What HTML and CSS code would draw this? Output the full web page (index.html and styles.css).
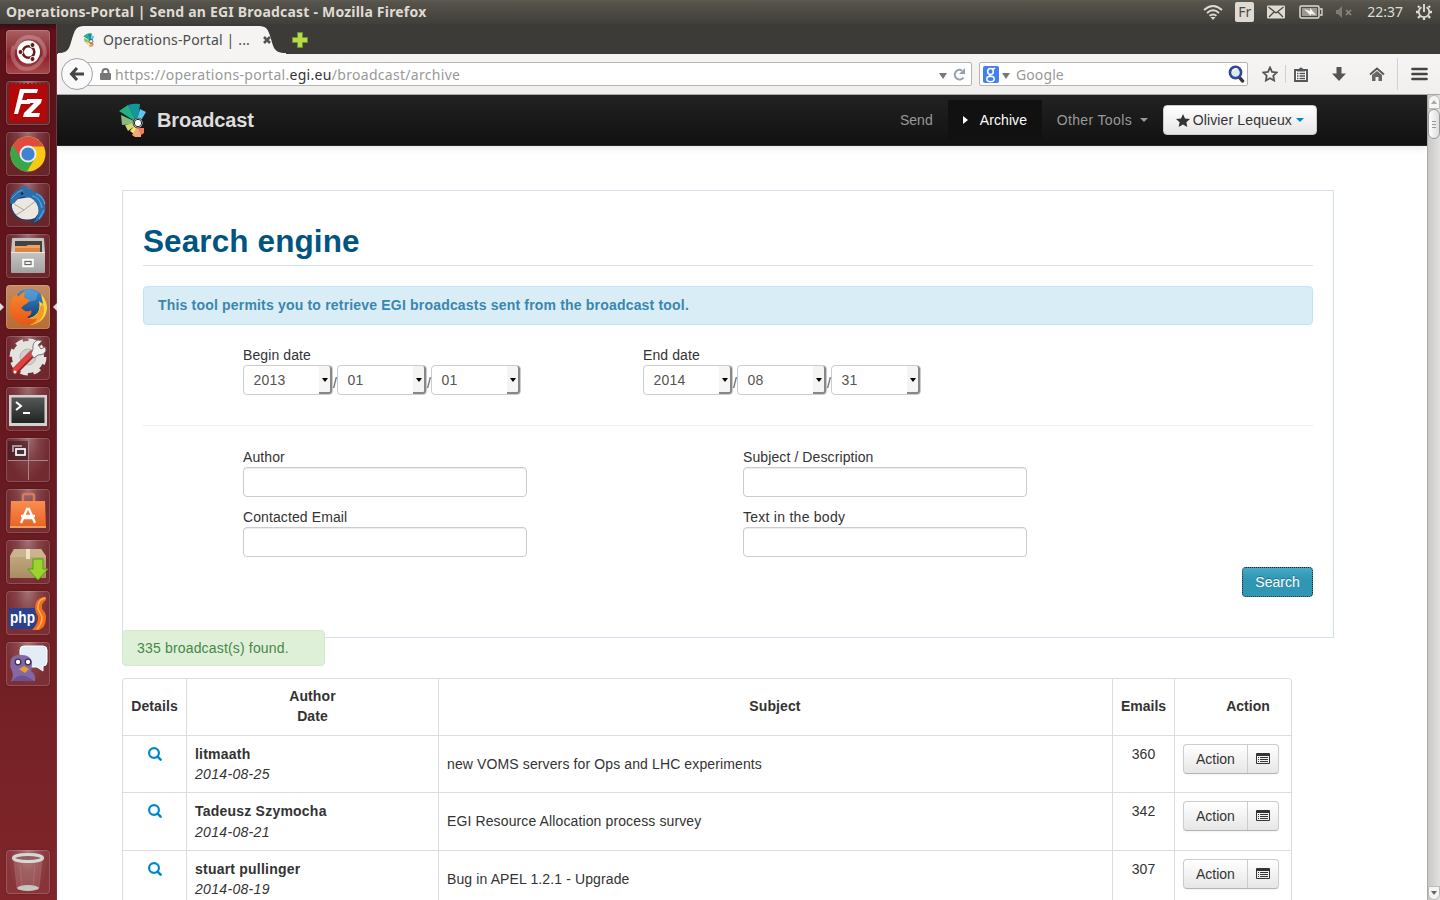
FILE: index.html
```html
<!DOCTYPE html>
<html lang="en">
<head>
<meta charset="utf-8">
<title>Operations-Portal | Send an EGI Broadcast</title>
<link rel="stylesheet" href="styles.css">
</head>
<body>
<svg class="defs" aria-hidden="true">
  <defs>
    <symbol id="egi" viewBox="0 0 28 34">
      <path d="M0 8 9 2l8 16-3-1z" fill="#22b183"/><path d="M9 2q6-2 12-1l-2 15-3 1z" fill="#14969a"/><path d="m21 6 6 3-6 10-3-2z" fill="#5fc4ec"/>
      <path d="m2 12 13 6-1 3-11 1z" fill="#88b97e"/><path d="m6 22 9-2 1 3-7 5z" fill="#cdd774"/><path d="m11 28 5-6 2 3-3 6z" fill="#fbe26a"/>
      <path d="m13 32 5-8 4 1v9h-6z" fill="#f4a878"/><path d="M19 25h6l0 5-3 2z" fill="#ee7f5b"/>
      <circle cx="19" cy="20" r="5.300" fill="#222"/><circle cx="19" cy="20" r="4.500" fill="#fff"/><circle cx="19" cy="20" r="3.700" fill="#fff" stroke="#222"/>
    </symbol>
    <symbol id="find" viewBox="0 0 14 14"><circle cx="6" cy="6" r="4.900" fill="none" stroke="#08c" stroke-width="2.200"/><path d="m9.600 9.600 3 3" stroke="#08c" stroke-width="2.600" stroke-linecap="round"/></symbol>
    <symbol id="list" viewBox="0 0 14 12"><path d="M1 0h12q1 0 1 1v9q0 1-1 1H1q-1 0-1-1V1q0-1 1-1zm0 3v7h12V3z" fill="#333" fill-rule="evenodd"/><path d="M2 4.500h1m1 0h8m-10 2h1m1 0h8m-10 2h1m1 0h8" stroke="#333"/></symbol>
    <linearGradient id="steel" x2="0" y2="1"><stop stop-color="#c4c4c2"/><stop offset="1" stop-color="#a2a2a0"/></linearGradient>
    <linearGradient id="orange" x2="0" y2="1"><stop stop-color="#f98e50"/><stop offset="1" stop-color="#ea6023"/></linearGradient>
    <linearGradient id="box" x2="0" y2="1"><stop stop-color="#c8b084"/><stop offset="1" stop-color="#a98d62"/></linearGradient>
    <linearGradient id="blue" x2="0" y2="1"><stop stop-color="#3c8fd6"/><stop offset="1" stop-color="#123667"/></linearGradient>
    <linearGradient id="flame" x2="0" y2="1"><stop stop-color="#f58a28"/><stop offset="1" stop-color="#e8551a"/></linearGradient>
    <linearGradient id="dark" x2="0" y2="1"><stop stop-color="#555857"/><stop offset="1" stop-color="#1f2322"/></linearGradient>
  </defs>
</svg>

<header class="titlebar">
  <span class="window-title">Operations-Portal | Send an EGI Broadcast - Mozilla Firefox</span>
  <div class="indicators">
    <svg class="wifi" width="20" height="16" viewBox="0 0 20 16" fill="none" stroke="#dfdbd2" stroke-width="1.900"><path d="M1 6q9-8 18 0M4 9q6-5.400 12 0M6.500 11.800q3.500-2.800 7 0"/><path d="m7.500 13 2.500 3 2.500-3z" fill="#dfdbd2" stroke="none"/></svg>
    <span class="keyboard">Fr</span>
    <svg width="18" height="14" viewBox="0 0 18 14"><rect width="18" height="13" y=".5" rx="1" fill="#dfdbd2"/><path d="m1.500 2 7.500 6 7.500-6M2 12l5-5m9 5-5-5" fill="none" stroke="#4a4943" stroke-width="1.300"/></svg>
    <svg width="24" height="14" viewBox="0 0 24 14"><rect x="1" y="1" width="19" height="12" rx="1.500" fill="none" stroke="#dfdbd2" stroke-width="1.500"/><rect x="3" y="3" width="15" height="8" fill="#9b9991"/><path d="M21 4h2v6h-2" fill="none" stroke="#dfdbd2" stroke-width="1.300"/><path d="m5 4 6 2V3l6 7-5-1v2z" fill="#f5f3ee"/></svg>
    <svg width="18" height="14" viewBox="0 0 18 14"><path d="M1 5h2l4-4v12L3 9H1z" fill="#7d7b74"/><path d="m11 5 5 5m0-5-5 5" stroke="#8a8880" stroke-width="1.700"/></svg>
    <span class="clock">22:37</span>
    <svg width="18" height="18" viewBox="0 0 18 18" fill="none" stroke="#dfdbd2"><path d="M6.500 4.200a5.300 5.300 0 1 0 5 0" stroke-width="1.800"/><path d="M9 1v8" stroke-width="1.900"/><path d="M4.500 4.500 3 3m10.500 1.500L15 3M4 9H1m13 0h3M5 13l-2 2m10.500-2 1.500 2M9 14.500V17" stroke-width="2.300"/></svg>
  </div>
</header>

<div class="desktop">
  <nav class="launcher">
    <span class="tile ubuntu"><svg viewBox="0 0 44 44"><path d="M9 19Q15 2 32 9q9 8 6 18M37 27q-7 15-22 11-12-8-7-22" fill="none" stroke="#fff" stroke-opacity=".24" stroke-width="4"/><circle cx="22.500" cy="22" r="11.500" fill="#fff"/><circle cx="22.500" cy="22" r="5.800" fill="none" stroke="#6c1a20" stroke-width="2.600"/><g fill="#6c1a20" stroke="#fff" stroke-width="1"><circle cx="14.500" cy="22" r="2.500"/><circle cx="26.500" cy="15" r="2.500"/><circle cx="26.500" cy="29" r="2.500"/></g></svg></span>
    <span class="tile"><svg viewBox="0 0 44 44"><rect x="3" y="3" width="38" height="38" fill="#b40808" stroke="#8b1518" stroke-width="2" stroke-dasharray="2 2"/><g fill="#fff"><path d="M14 8h18l-1 4H18l-2 7h9l-1 4h-9l-3 10H8z"/><path d="M21 18h15l-1 4-10 10h9l-1 4H17l1-4 10-10h-8z"/></g></svg></span>
    <span class="tile"><svg viewBox="0 0 44 44"><circle cx="22" cy="22" r="17.500" fill="#f6c915"/><path d="M7 13A17.500 17.500 0 0 0 21 39.500L29 26l-13-2z" fill="#3ba648"/><path d="M7 13A17.500 17.500 0 0 1 37.500 14.500H22L14 25z" fill="#e04b40"/><circle cx="22" cy="22" r="8.500" fill="#e9eef3"/><circle cx="22" cy="22" r="6.600" fill="#3f83cf"/></svg></span>
    <span class="tile"><svg viewBox="0 0 44 44"><path d="M5 16q5 2 9-4l22 6 2 13q-4 9-14 10 3-2 4-4-13 3-20-5-5-7-3-16z" fill="#1c3f70"/><path d="m12 16 18-3 5 14-6 8q-11 4-18-2-6-6-5-12z" fill="#ece8df"/><path d="m8 21 10 6 13-10M18 27l-8 5" fill="none" stroke="#aaa69d"/><path d="M4 20Q4 10 13 6q4-3 10-3l-4 3q6-1 9 3 9 0 11 12 2 10-6 16l-6 3q7-8 5-16-3-9-11-10-8-1-11 4-2 4-6 2z" fill="#2b6fae"/><path d="M26 13q8 1 10 12m-6-14q7 2 9 10M33 36l5-9" fill="none" stroke="#60a6dc" stroke-width="1.200"/><path d="m5 16 7-7 5-2" fill="none" stroke="#5a9fd6"/><circle cx="16" cy="10.500" r="1.200" fill="#10233c"/></svg></span>
    <span class="tile"><svg viewBox="0 0 44 44"><path d="M6 5q0-1 1-1h30q1 0 1 1l1 14H5z" fill="#c4c4c1"/><path d="M9 7h27v11H9z" fill="#444341"/><path d="M9 12h11l2-1h12v8H9z" fill="#f0a15c"/><path d="M9 14h25v4H9z" fill="#db8340"/><path d="M5 18h34v20q0 1-1 1H6q-1 0-1-1z" fill="url(#steel)"/><path d="M5 18.500h34" stroke="#e6e6e4"/><rect x="17" y="25.500" width="10" height="7" fill="#ddd" stroke="#fff" stroke-width="1.500"/><rect x="19" y="27.500" width="6" height="3" fill="#eee" stroke="#666"/></svg></span>
    <span class="tile active"><svg viewBox="0 0 44 44"><circle cx="23" cy="20" r="16" fill="url(#blue)"/><path d="M18 5q8-2 14 3l-2 7-7 2-4-5z" fill="#67a9da" opacity=".55"/><path d="M35 9q6 7 6 14-1 14-16 17l-6-6q12-2 14-9 1-5 0-9l4 3z" fill="#fbd33c"/><path d="M37 19q4 14-9 20l-6-5q12-3 12-12z" fill="#f49a25"/><path d="m7 12 4-3 1 3q4-5 7-5-1 4 0 6l4 2q0 3-5 5l-3 3 4 3q4 1 6-1 2 5-4 7 5 4 10 1-2 6-8 7-17 0-19-15Q4 17 7 12z" fill="url(#flame)"/></svg></span>
    <span class="tile"><svg viewBox="0 0 44 44"><circle cx="22" cy="21" r="11.500" fill="none" stroke="#e4e3e0" stroke-width="9"/><circle cx="22" cy="21" r="16.500" fill="none" stroke="#e4e3e0" stroke-width="4" stroke-dasharray="7.400 5.560"/><circle cx="22" cy="21" r="8" fill="#cfcecc" stroke="#b8b7b4"/><path d="m9 35 17-17" stroke="#922" stroke-width="7" stroke-linecap="round"/><path d="m9 34 17-17" stroke="#de4341" stroke-width="5" stroke-linecap="round"/><path d="m25 18 2-5q-1-7 5-9l4 1-4 4 3 4 4-2 1 3q-1 5-8 5l-4 3z" fill="#efefed" stroke="#777"/><circle cx="9" cy="36" r="1.500" fill="#fff"/></svg></span>
    <span class="tile"><svg viewBox="0 0 44 44"><path d="M3 8h38v31H3z" fill="#d2d2cf"/><path d="M5.500 10.500h33V36h-33z" fill="url(#dark)"/><path d="m10 15 5 4-5 4M17 26h7" fill="none" stroke="#fff" stroke-width="2"/></svg></span>
    <span class="tile switcher"><svg viewBox="0 0 44 44"><path d="M2 3h20v19H2z" fill="#3a1820" opacity=".6"/><path d="M22.500 3v39M2 22.500h40" stroke="#a98488"/><path d="M7 14V8h9" fill="none" stroke="#ac9397" stroke-width="2"/><rect x="10" y="11" width="9" height="6" fill="#493136" stroke="#fff" stroke-width="1.700"/></svg></span>
    <span class="tile"><svg viewBox="0 0 44 44"><path d="M17 12V7q0-2 2-2h7q2 0 2 2v5" fill="none" stroke="#d77b5d" stroke-width="2.500"/><path d="M5 12h34l1 27H4z" fill="url(#orange)"/><path d="M4 37h36v2H4z" fill="#e9a15d"/><path d="m15 34 6-14h2l6 14M15 27h14M17 29h10" fill="none" stroke="#fff" stroke-width="2.300"/></svg></span>
    <span class="tile"><svg viewBox="0 0 44 44"><path d="m8 9 27 0 5 7v22H4V16z" fill="url(#box)"/><path d="m8 9-4 8h36l-5-8z" fill="#c8b58f"/><path d="M20 9h4v10h-4z" fill="#eee2c4"/><path d="M27 19h10v10h5l-10 11-10-11h5z" fill="#9bd42b" stroke="#539d18"/></svg></span>
    <span class="tile"><svg viewBox="0 0 44 44"><path d="M3 17h27v21H3z" fill="#2c418d"/><path d="M40 6h-3q-8 2-8 11 0 4 3 8 1 7-6 14h7q7-2 7-13 0-4-4-8-1-6 4-9z" fill="#f36c21"/><path d="M39 7q-8 2-7 11l4 8q0 7-5 12" fill="none" stroke="#ffb34b" stroke-width="1.500"/><text x="4" y="32" class="php" textLength="25" lengthAdjust="spacingAndGlyphs">php</text></svg></span>
    <span class="tile"><svg viewBox="0 0 44 44"><path d="M18 4h19q4 0 4 4v12q0 4-4 4v5l-6-4H17q-3 0-3-4V8q0-4 4-4z" fill="#e3edf8" stroke="#fff"/><path d="M5 39q3-5 1-10-3-5-1-12 4-5 11-4 9 0 10 8 0 4-1 8 5 3 4 10z" fill="#8468a6"/><path d="M6 39q9-11 22 0z" fill="#6b5290"/><g fill="#fff" stroke="#413150" stroke-width="1.300"><circle cx="12" cy="20" r="2.800"/><circle cx="22" cy="20" r="2.800"/></g><path d="m13 27 5-3 5 3-4 4z" fill="#ed9d29"/></svg></span>
    <span class="tile trash"><svg viewBox="0 0 44 44"><path d="m8 9 3 29q11 4 22 0l3-29z" fill="#fff" fill-opacity=".12" stroke="#b98383" stroke-opacity=".3"/><ellipse cx="22" cy="38" rx="11" ry="3" fill="#c6c6c1"/><ellipse cx="22" cy="8" rx="14.500" ry="3.500" fill="#8e6060" stroke="#d7d7d3" stroke-width="3"/><path d="M14 15l2 22m13-22-2 22" fill="none" stroke="#d29a98" stroke-opacity=".25"/></svg></span>
    <i class="running-left"></i><i class="running-right"></i>
  </nav>

  <section class="browser">
    <div class="tabstrip">
      <div class="tab">
        <svg class="tab-shape" viewBox="0 0 228 30" preserveAspectRatio="none"><path d="M0 30v-1c13 0 11-7 16-20 2-6 5-7 12-7h171c7 0 10 1 12 7 5 13 3 20 17 20v1z" fill="#f5f4f2"/></svg>
        <svg class="favicon" width="12" height="14"><use href="#egi"/></svg>
        <span class="tab-title">Operations-Portal | ...</span>
        <svg class="close" width="8" height="8" viewBox="0 0 8 8"><path d="m1 1 6 6m0-6L1 7" stroke="#54534f" stroke-width="2.600"/></svg>
      </div>
      <svg class="new-tab" width="16" height="16" viewBox="0 0 16 16"><path d="M5.500.5h5v5h5v5h-5v5h-5v-5h-5v-5h5z" fill="#b9d94a" stroke="#67952a"/></svg>
    </div>
    <div class="toolbar">
      <div class="back"><svg width="16" height="16" viewBox="0 0 16 16"><path d="M8 2 2.500 8 8 14M3 8h12" fill="none" stroke="#444" stroke-width="3"/></svg></div>
      <div class="address">
        <svg class="lock" width="11" height="13" viewBox="0 0 11 13"><path d="M2.500 6V4q0-3 3-3t3 3v2" fill="none" stroke="#777" stroke-width="2"/><rect y="5" width="11" height="7" rx="1" fill="#777"/></svg>
        <span class="url">https://operations-portal.<b>egi.eu</b>/broadcast/archive</span>
        <svg class="drop" width="8" height="6"><path d="M0 0h8L4 6z" fill="#777"/></svg>
        <svg width="13" height="13" viewBox="0 0 13 13"><path d="M10.500 9.500A4.800 4.800 0 1 1 9 2.500" fill="none" stroke="#93a0ae" stroke-width="2"/><path d="M12 0v6H6z" fill="#93a0ae"/></svg>
      </div>
      <div class="searchbox">
        <span class="engine"><svg width="12" height="16" viewBox="0 0 12 16" fill="none" stroke="#fff" stroke-width="1.500"><ellipse cx="5.500" cy="4.500" rx="2.800" ry="3"/><ellipse cx="5.500" cy="12" rx="3.700" ry="2.700"/><path d="M7 2q2 0 3-1M5 7.500q-1 1 1 2"/></svg></span>
        <svg class="drop" width="8" height="6"><path d="M0 0h8L4 6z" fill="#777"/></svg>
        <span class="hint">Google</span>
        <svg width="17" height="18" viewBox="0 0 17 18"><path d="m12 13 2.500 3" stroke="#333" stroke-width="3.500" stroke-linecap="round"/><circle cx="7.500" cy="7.500" r="5.600" fill="#dbe8f6" stroke="#2e4896" stroke-width="2.600"/><path d="M4.500 6q2-3 5-2" fill="none" stroke="#fff" stroke-width="1.500"/></svg>
      </div>
      <div class="tools">
        <svg width="16" height="16" viewBox="0 0 16 16"><path d="m8 1.500 2 4.300 4.700.6-3.400 3.300.8 4.800L8 12.200l-4.100 2.300.8-4.800L1.300 6.400 6 5.800z" fill="none" stroke="#555" stroke-width="1.800"/></svg>
        <i class="rule"></i>
        <svg class="clip" width="14" height="15" viewBox="0 0 14 15"><path d="M1 3h12v11H1z" fill="#fff" stroke="#555" stroke-width="1.900"/><path d="M3 4.500V2.500h2q0-2 2-2t2 2h2v2z" fill="#555"/><path d="M3 6.500h1.500m1 0H11m-8 2.500h1.500M5.500 9H11m-8 2.500h1.500m1 0H11" stroke="#555" stroke-width="1.300"/></svg>
        <svg class="down" width="14" height="14" viewBox="0 0 14 14"><path d="M4.500 0h5v6.500H14L7 14 0 6.500h4.500z" fill="#555"/></svg>
        <svg class="home" width="16" height="14" viewBox="0 0 16 14"><path d="m1 7.500 7-6 7 6" fill="none" stroke="#555" stroke-width="1.800"/><path d="m3 8 5-4 5 4v6H9.500v-4h-3v4H3z" fill="#666"/></svg>
        <i class="rule tall-rule"></i>
        <svg class="burger" width="17" height="14" viewBox="0 0 17 14"><path d="M1.500 2h14M1.500 7h14M1.500 12h14" stroke="#444" stroke-width="2.700" stroke-linecap="round"/></svg>
      </div>
    </div>

    <div class="viewport">
      <main class="page">
        <div class="navbar">
          <svg class="logo" width="28" height="34"><use href="#egi"/></svg>
          <span class="brand">Broadcast</span>
          <a class="nav send">Send</a>
          <a class="nav archive"><i></i>Archive</a>
          <a class="nav other">Other Tools<i></i></a>
          <a class="user"><svg width="14" height="13" viewBox="0 0 14 13"><path d="m7 0 2 4.400 5 .6-3.600 3.200.9 4.800L7 10.600 2.700 13l.9-4.800L0 5l5-.6z" fill="#333"/></svg><span>Olivier Lequeux</span><i></i></a>
        </div>

        <section class="panel">
          <h1><span>Search engine</span></h1>
          <p class="info"><span>This tool permits you to retrieve EGI broadcasts sent from the broadcast tool.</span></p>
          <div class="dates">
            <div class="date"><label>Begin date</label>
              <div class="selects"><span class="select">2013<i></i></span><b>/</b><span class="select">01<i></i></span><b>/</b><span class="select">01<i></i></span></div></div>
            <div class="date"><label>End date</label>
              <div class="selects"><span class="select">2014<i></i></span><b>/</b><span class="select">08<i></i></span><b>/</b><span class="select">31<i></i></span></div></div>
          </div>
          <hr>
          <div class="fields">
            <div><label>Author</label><input type="text"></div>
            <div><label>Subject / Description</label><input type="text"></div>
            <div><label>Contacted Email</label><input type="text"></div>
            <div><label class="body-label">Text in the body</label><input type="text"></div>
          </div>
          <div class="submit"><button class="search">Search</button></div>
        </section>

        <p class="found">335 broadcast(s) found.</p>

        <table class="results">
          <thead><tr><th class="c1">Details</th><th class="c2">Author<br>Date</th><th class="c3">Subject</th><th class="c4">Emails</th><th class="c5">Action</th></tr></thead>
          <tbody>
            <tr><td class="mid"><svg width="14" height="14"><use href="#find"/></svg></td><td><strong>litmaath</strong><em>2014-08-25</em></td><td class="subject">new VOMS servers for Ops and LHC experiments</td><td class="mid">360</td><td><div class="group"><span>Action</span><span class="more"><svg width="14" height="12"><use href="#list"/></svg></span></div></td></tr>
            <tr class="tall"><td class="mid"><svg width="14" height="14"><use href="#find"/></svg></td><td><strong>Tadeusz Szymocha</strong><em>2014-08-21</em></td><td class="subject">EGI Resource Allocation process survey</td><td class="mid">342</td><td><div class="group"><span>Action</span><span class="more"><svg width="14" height="12"><use href="#list"/></svg></span></div></td></tr>
            <tr><td class="mid"><svg width="14" height="14"><use href="#find"/></svg></td><td><strong>stuart pullinger</strong><em>2014-08-19</em></td><td class="subject">Bug in APEL 1.2.1 - Upgrade</td><td class="mid">307</td><td><div class="group"><span>Action</span><span class="more"><svg width="14" height="12"><use href="#list"/></svg></span></div></td></tr>
          </tbody>
        </table>
      </main>
      <div class="scrollbar">
        <span class="arrow"><svg width="6" height="4"><path d="M0 4h6L3 0z" fill="#aaa"/></svg></span>
        <span class="thumb"><svg width="4" height="7"><path d="M0 .5h4M0 3.500h4M0 6.500h4" stroke="#999"/></svg></span>
        <span class="arrow last"><svg width="6" height="4"><path d="M0 0h6L3 4z" fill="#666"/></svg></span>
      </div>
    </div>
  </section>
</div>
</body>
</html>
```

FILE: styles.css
```css
* { box-sizing: border-box; }
html, body { margin: 0; height: 100%; overflow: hidden; }
body { display: flex; flex-direction: column; width: 1440px; height: 900px; background: #fff; color: #333; font: 14px/20px "Liberation Sans", Arial, sans-serif; }
svg { display: block; flex: none; }
.defs { position: absolute; width: 0; height: 0; }

/* Top panel */
.titlebar { flex: none; height: 24px; display: flex; align-items: center; justify-content: space-between; padding: 0 7px 0 6px; background: linear-gradient(#5e5c50, #55534b 10%, #403f3a); color: #dfdbd2; font-family: "Noto Sans", "Open Sans", sans-serif; }
.window-title { font-size: 14px; font-weight: 700; white-space: nowrap; letter-spacing: .2px; }
.indicators { display: flex; align-items: center; font-size: 14px; }
.wifi { position: relative; left: -2px; }
.keyboard { margin: 0 13px 0 10px; width: 19px; height: 20px; border-radius: 2px; background: #dfdbd2; color: #4a4943; text-align: center; }
.indicators svg:nth-of-type(3) { margin: 0 12px 0 14px; }
.clock { margin: 0 12px 0 14px; }

.desktop { flex: 1; display: flex; min-height: 0; }

/* Launcher */
.launcher { position: relative; flex: none; width: 57px; padding: 6px; display: flex; flex-direction: column; gap: 7px; background: linear-gradient(#350e13, #5c1218 7px, #5f141b 20%, #681b21 55%, #80262a); border-right: 1px solid #713744; }
.tile { width: 44px; height: 44px; flex: none; border-radius: 4px; background: radial-gradient(ellipse at 50% 0, #ffffff60, #ffffff2c 35%, #ffffff12 70%); box-shadow: inset 0 0 0 1px #ffffff2b, 0 0 2px #0005; }
.ubuntu { background: linear-gradient(#a86064, #8c2228 60%, #a8484b); }
.active { background: linear-gradient(#c38b64, #b76c35); }
.trash { margin-top: auto; }
.php { font: 700 17px "Liberation Sans", Arial, sans-serif; fill: #fff; }
.running-left, .running-right { position: absolute; top: 279px; border: 4px solid transparent; }
.running-left { left: 0; border-left-color: #ddd; border-right: 0; }
.running-right { right: -1px; border-right-color: #ddd; border-left: 0; }

/* Browser chrome */
.browser { flex: 1; display: flex; flex-direction: column; min-width: 0; }
.tabstrip { flex: none; height: 30px; display: flex; background: #3c3b37; font-family: "Noto Sans", sans-serif; }
.tab { position: relative; width: 228px; margin-left: 1px; padding: 0 14px 0 25px; display: flex; align-items: center; }
.tab-shape { position: absolute; inset: 0; width: 228px; height: 30px; }
.tab .favicon, .tab-title, .close { position: relative; top: 1px; }
.tab-title { width: 148px; margin-left: 8px; margin-right: 12px; color: #4c4c4c; white-space: nowrap; letter-spacing: .16px; }
.new-tab { margin: 8px 0 0 6px; }
.toolbar { flex: none; height: 41px; display: flex; align-items: center; background: linear-gradient(#f6f5f4, #f0efed); border-bottom: 1px solid #aaa9a6; font-family: "Noto Sans", sans-serif; color: #999; }
.back { position: relative; z-index: 1; flex: none; width: 32px; height: 32px; margin-left: 4px; border: 1px solid #9ba0a8; border-radius: 50%; background: #fafafa; display: flex; align-items: center; justify-content: center; }
.address { display: flex; align-items: center; width: 885px; height: 24px; margin-left: -6px; padding: 0 5px 0 12px; background: #fff; border: 1px solid #b5b4b1; border-radius: 0 2px 2px 0; }
.url { margin-left: 4px; padding-top: 1px; flex: 1; letter-spacing: .3px; }
.url b { font-weight: 400; color: #333; }
.address .drop { margin-right: 6px; margin-top: 3px; }
.searchbox { display: flex; align-items: center; width: 269px; height: 24px; margin-left: 7px; padding: 0 2px 0 3px; background: #fff; border: 1px solid #b5b4b1; border-radius: 2px; }
.engine { width: 16px; height: 17px; border-radius: 2px; background: #4580f0; padding: 1px 2px; }
.searchbox .drop { margin: 3px 6px 0 3px; }
.hint { flex: 1; padding-top: 1px; letter-spacing: .1px; }
.tools { display: flex; align-items: center; margin-left: 14px; }
.rule { width: 1px; height: 18px; margin-left: 7px; background: #ccd1d8; }
.tall-rule { height: 32px; margin-left: 12px; }
.clip { margin-left: 8px; }
.down { margin-left: 24px; }
.home { margin-left: 23px; }
.burger { margin-left: 13px; }

/* Page */
.viewport { flex: 1; min-height: 0; display: flex; }
.page { flex: 1; min-width: 0; overflow: hidden; background: #fff; }
.navbar { display: flex; height: 51px; padding-left: 62px; background: linear-gradient(#222, #111); border-bottom: 1px solid #252525; box-shadow: 0 1px 8px #0002; }
.logo { margin-top: 8px; }
.brand { width: 727px; margin: 15px 0 0 10px; font-size: 20px; font-weight: 700; letter-spacing: -.1px; color: #ddd; }
.nav { display: flex; align-items: center; height: 40px; margin-top: 5px; color: #999; white-space: nowrap; }
.send { padding: 0 15px 0 16px; }
.archive { width: 94px; padding-left: 15px; background: #111; color: #fff; letter-spacing: .1px; }
.archive i { border: 4px solid transparent; border-left: 5px solid #fff; border-right: 0; margin-right: 12px; }
.other { width: 121px; padding-left: 15px; letter-spacing: .36px; }
.other i { margin-left: 8px; }
.other i, .user i { border: 4px solid transparent; border-top-color: #999; border-bottom: 0; }
.user { display: flex; align-items: center; width: 154px; height: 30px; margin-top: 10px; padding-left: 12px; border: 1px solid #ccc; border-radius: 4px; background: linear-gradient(#fff, #e6e6e6); white-space: nowrap; letter-spacing: .13px; }
.user span { margin: 0 4px 0 3px; }
.user i { border-top-color: #08c; }

.panel { width: 1212px; height: 448px; margin: 44px 0 0 65px; padding: 30px 20px 0; border: 1px solid #d5e1ea; }
h1 { height: 45px; margin: 0 0 20px; border-bottom: 1px solid #d5e1ea; font-size: 31.500px; line-height: 40px; letter-spacing: .1px; color: #005580; }
.info { height: 39px; margin: 0 0 20px; padding: 8px 14px; border: 1px solid #bce8f1; border-radius: 4px; background: #d9edf7; color: #3a87ad; font-weight: 700; letter-spacing: .185px; }
label { display: block; height: 20px; letter-spacing: .1px; }
.body-label { letter-spacing: .26px; }
.dates { display: grid; grid-template-columns: 400px 400px; height: 80px; padding-left: 100px; }
.selects { display: flex; }
.select { display: flex; justify-content: space-between; align-items: center; width: 90px; height: 30px; padding-left: 9.500px; border: 1px solid #ccc; border-radius: 4px; color: #555; letter-spacing: .2px; }
.select i { display: flex; align-items: center; justify-content: center; width: 13px; height: 28px; background: #f6f5f4; border-right: 2px solid #888; border-bottom: 2px solid #888; border-radius: 0 3px 3px 0; }
.select i::after { content: ""; margin-top: 2px; border: 3.500px solid transparent; border-top: 4px solid #000; border-bottom: 0; }
.selects b { width: 4px; padding-top: 8px; font-weight: 400; color: #555; }
hr { height: 1px; margin: 0 0 21px; border: 0; background: #eee; }
.fields { display: grid; grid-template-columns: 500px 284px; grid-auto-rows: 60px; padding-left: 100px; }
input { display: block; width: 284px; height: 30px; border: 1px solid #ccc; border-radius: 4px; box-shadow: inset 0 1px 1px #00000013; }
.submit { display: flex; justify-content: flex-end; }
.search { width: 71px; height: 30px; padding: 0; border: 1px dotted #222; border-radius: 4px; background: linear-gradient(#46a9c7, #2f96b4 40%); color: #fff; font: inherit; text-shadow: 0 -1px 0 #0004; }
.found { position: relative; width: 203px; height: 36px; margin: -8px 0 12px 65px; padding: 7px 14px; border: 1px solid #d6e9c6; border-radius: 4px; background: #dff0d8; color: #468847; letter-spacing: .17px; }

/* Results */
.results { width: 1170px; margin-left: 65px; table-layout: fixed; border-collapse: separate; border-spacing: 0; border: 1px solid #ddd; border-left: 0; border-radius: 4px; }
th, td { height: 57px; padding: 8px; border-left: 1px solid #ddd; vertical-align: top; text-align: left; }
th { height: 56px; padding: 6px 8px 8px; text-align: center; vertical-align: middle; letter-spacing: .1px; }
td { border-top: 1px solid #ddd; }
.tall td { height: 58px; }
.tall em { margin-top: 1px; }
th:first-child { border-top-left-radius: 4px; }
.c1 { width: 64px; padding: 0 0 2px; }
.c2 { width: 252px; }
.c3 { width: 674px; padding-right: 9px; }
.c4 { width: 62px; padding: 0 0 2px; letter-spacing: 0; }
.c5 { padding-left: 30px; padding-right: 0; letter-spacing: 0; }
.mid { text-align: center; }
.mid svg { margin: 3px auto 0; }
strong, em { display: block; }
strong { letter-spacing: .22px; }
em { letter-spacing: .32px; }
.subject { padding-top: 18px; letter-spacing: .12px; }
.group { display: flex; width: 96px; height: 30px; border: 1px solid #ccc; border-bottom-color: #b3b3b3; border-radius: 4px; background: linear-gradient(#fff, #e6e6e6); box-shadow: 0 1px 2px #0000000d; }
.group span { width: 64px; padding: 4px 0 0 12px; }
.group .more { width: 31px; padding: 8px 0 0 8px; border-left: 1px solid #ccc; }

.scrollbar { flex: none; width: 13px; display: flex; flex-direction: column; background: linear-gradient(90deg, #c9c8c5, #e3e1df); border-left: 1px solid #aaa; }
.arrow { display: flex; align-items: center; justify-content: center; height: 14px; background: #f5f5f4; border: 1px solid #bbb; border-radius: 6px 6px 0 0; }
.thumb { display: flex; align-items: center; justify-content: center; height: 30px; background: linear-gradient(90deg, #fff, #ddd); border: 1px solid #999; border-radius: 6px; }
.last { margin-top: auto; border-radius: 0 0 6px 6px; }
```
